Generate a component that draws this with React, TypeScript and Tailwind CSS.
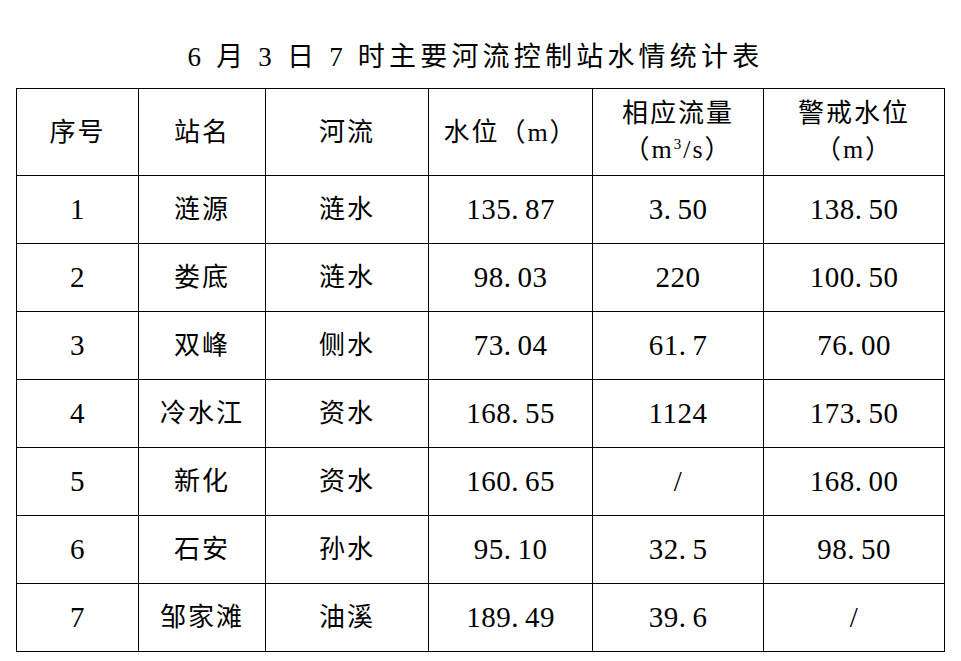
const FONT = "font-['Liberation_Serif','Noto_Sans_CJK_SC',serif]";

const rows = [
  ["1", "涟源", "涟水", "135.87", "3.50", "138.50"],
  ["2", "娄底", "涟水", "98.03", "220", "100.50"],
  ["3", "双峰", "侧水", "73.04", "61.7", "76.00"],
  ["4", "冷水江", "资水", "168.55", "1124", "173.50"],
  ["5", "新化", "资水", "160.65", "/", "168.00"],
  ["6", "石安", "孙水", "95.10", "32.5", "98.50"],
  ["7", "邹家滩", "油溪", "189.49", "39.6", "/"],
];

const cell = "flex flex-col items-center justify-center border-r border-b border-black text-center";

// numbers: the period takes a wider slot, as in the source document
function Num({ v }: { v: string }) {
  const [a, b] = v.split(".");
  return (
    <span className="text-[29px] tracking-[0.5px]">
      {a}
      {b !== undefined && (
        <>
          <span className="pr-[6px]">.</span>
          {b}
        </>
      )}
    </span>
  );
}

export default function App() {
  return (
    <div className={`w-[961px] h-[661px] bg-white text-black ${FONT}`}>
      {/* title */}
      <div className="h-[88px] w-[945px] flex items-start justify-center pt-[39px]">
        <h1 className="text-[27px] leading-[36px] tracking-[4.2px] font-normal pl-[6px]">
          6 月 3 日 7 时主要河流控制站水情统计表
        </h1>
      </div>

      <div className="ml-[16px] w-[929px] border-l border-t border-black grid grid-cols-[122px_127px_163px_164px_171px_181px] grid-rows-[87px_repeat(7,68px)] text-[26px] tracking-[2px]">
        <div className={cell}>序号</div>
        <div className={cell}>站名</div>
        <div className={cell}>河流</div>
        <div className={cell}>水位（m）</div>
        <div className={`${cell} leading-[36px]`}>
          <span>相应流量</span>
          <span>
            （m<sup className="text-[15px] relative -top-[9px] align-baseline">3</sup>/s）
          </span>
        </div>
        <div className={`${cell} leading-[36px]`}>
          <span>警戒水位</span>
          <span>（m）</span>
        </div>

        {rows.map((r) =>
          r.map((v, i) => (
            <div key={r[0] + "-" + i} className={cell}>
              {i === 1 || i === 2 ? v : <Num v={v} />}
            </div>
          ))
        )}
      </div>
    </div>
  );
}
